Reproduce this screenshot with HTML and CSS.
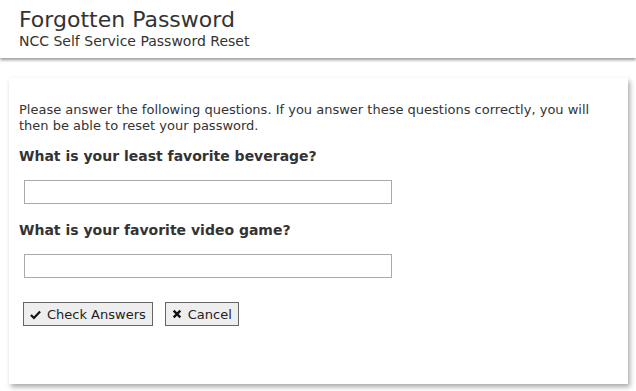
FILE: index.html
```html
<!DOCTYPE html>
<html lang="en">
<head>
  <meta charset="utf-8">
  <title>Forgotten Password</title>
  <link rel="stylesheet" href="styles.css">
</head>
<body>
  <div class="header">
    <div class="header-title">Forgotten Password</div>
    <div class="header-subtitle">NCC Self Service Password Reset</div>
  </div>

  <div class="content">
    <div class="card">
      <p class="intro">Please answer the following questions. If you answer these questions correctly, you will then be able to reset your password.</p>

      <form class="qa-form" onsubmit="return false">
        <h2 class="question">What is your least favorite beverage?</h2>
        <input class="answer" type="text" name="answer1">

        <h2 class="question">What is your favorite video game?</h2>
        <input class="answer" type="text" name="answer2">

        <div class="buttons">
          <button class="btn" type="submit">
            <svg class="btn-icon" viewBox="0 0 12 12" width="11" height="11"><path d="M1 6.5 L4.3 9.8 L11 2.6" fill="none" stroke="#111" stroke-width="2.4"/></svg>
            Check Answers
          </button>
          <button class="btn" type="button">
            <svg class="btn-icon" viewBox="0 0 12 12" width="10" height="10"><path d="M2 2 L10 10 M10 2 L2 10" fill="none" stroke="#111" stroke-width="2.8"/></svg>
            Cancel
          </button>
        </div>
      </form>
    </div>
  </div>
</body>
</html>
```

FILE: styles.css
```css
body {
  margin: 0;
  background: #fff;
  color: #333;
  font-family: Verdana, "DejaVu Sans", sans-serif;
  font-size: 13px;
}

.header {
  height: 58px;
  padding: 7px 19px 0;
  box-sizing: border-box;
  background: #fff;
  box-shadow: 0 2px 3px #999;
  position: relative;
}

.header-title {
  font-size: 22px;
  line-height: 26px;
}

.header-subtitle {
  font-size: 14px;
  line-height: 16px;
}

.content {
  padding: 20px 8px 7px 9px;
}

.card {
  height: 306px;
  box-sizing: border-box;
  padding: 24px 10px 10px;
  background: #fff;
  box-shadow: 2px 3px 5px #aaa;
}

.intro {
  margin: 0 0 12px;
  line-height: 16px;
}

.question {
  margin: 0;
  font-size: 14px;
  line-height: 20px;
  font-weight: bold;
}

.answer {
  display: block;
  width: 368px;
  height: 24px;
  box-sizing: border-box;
  margin: 14px 0 16px 5px;
  border: 1px solid #a9a9a9;
  padding: 2px 4px;
  font: inherit;
}

.buttons {
  display: flex;
  gap: 12px;
  margin: 24px 0 0 4px;
}

.btn {
  display: flex;
  align-items: center;
  gap: 6px;
  height: 24px;
  padding: 0 6px;
  border: 1px solid #666;
  background: #eee;
  color: #222;
  font: inherit;
}
```
